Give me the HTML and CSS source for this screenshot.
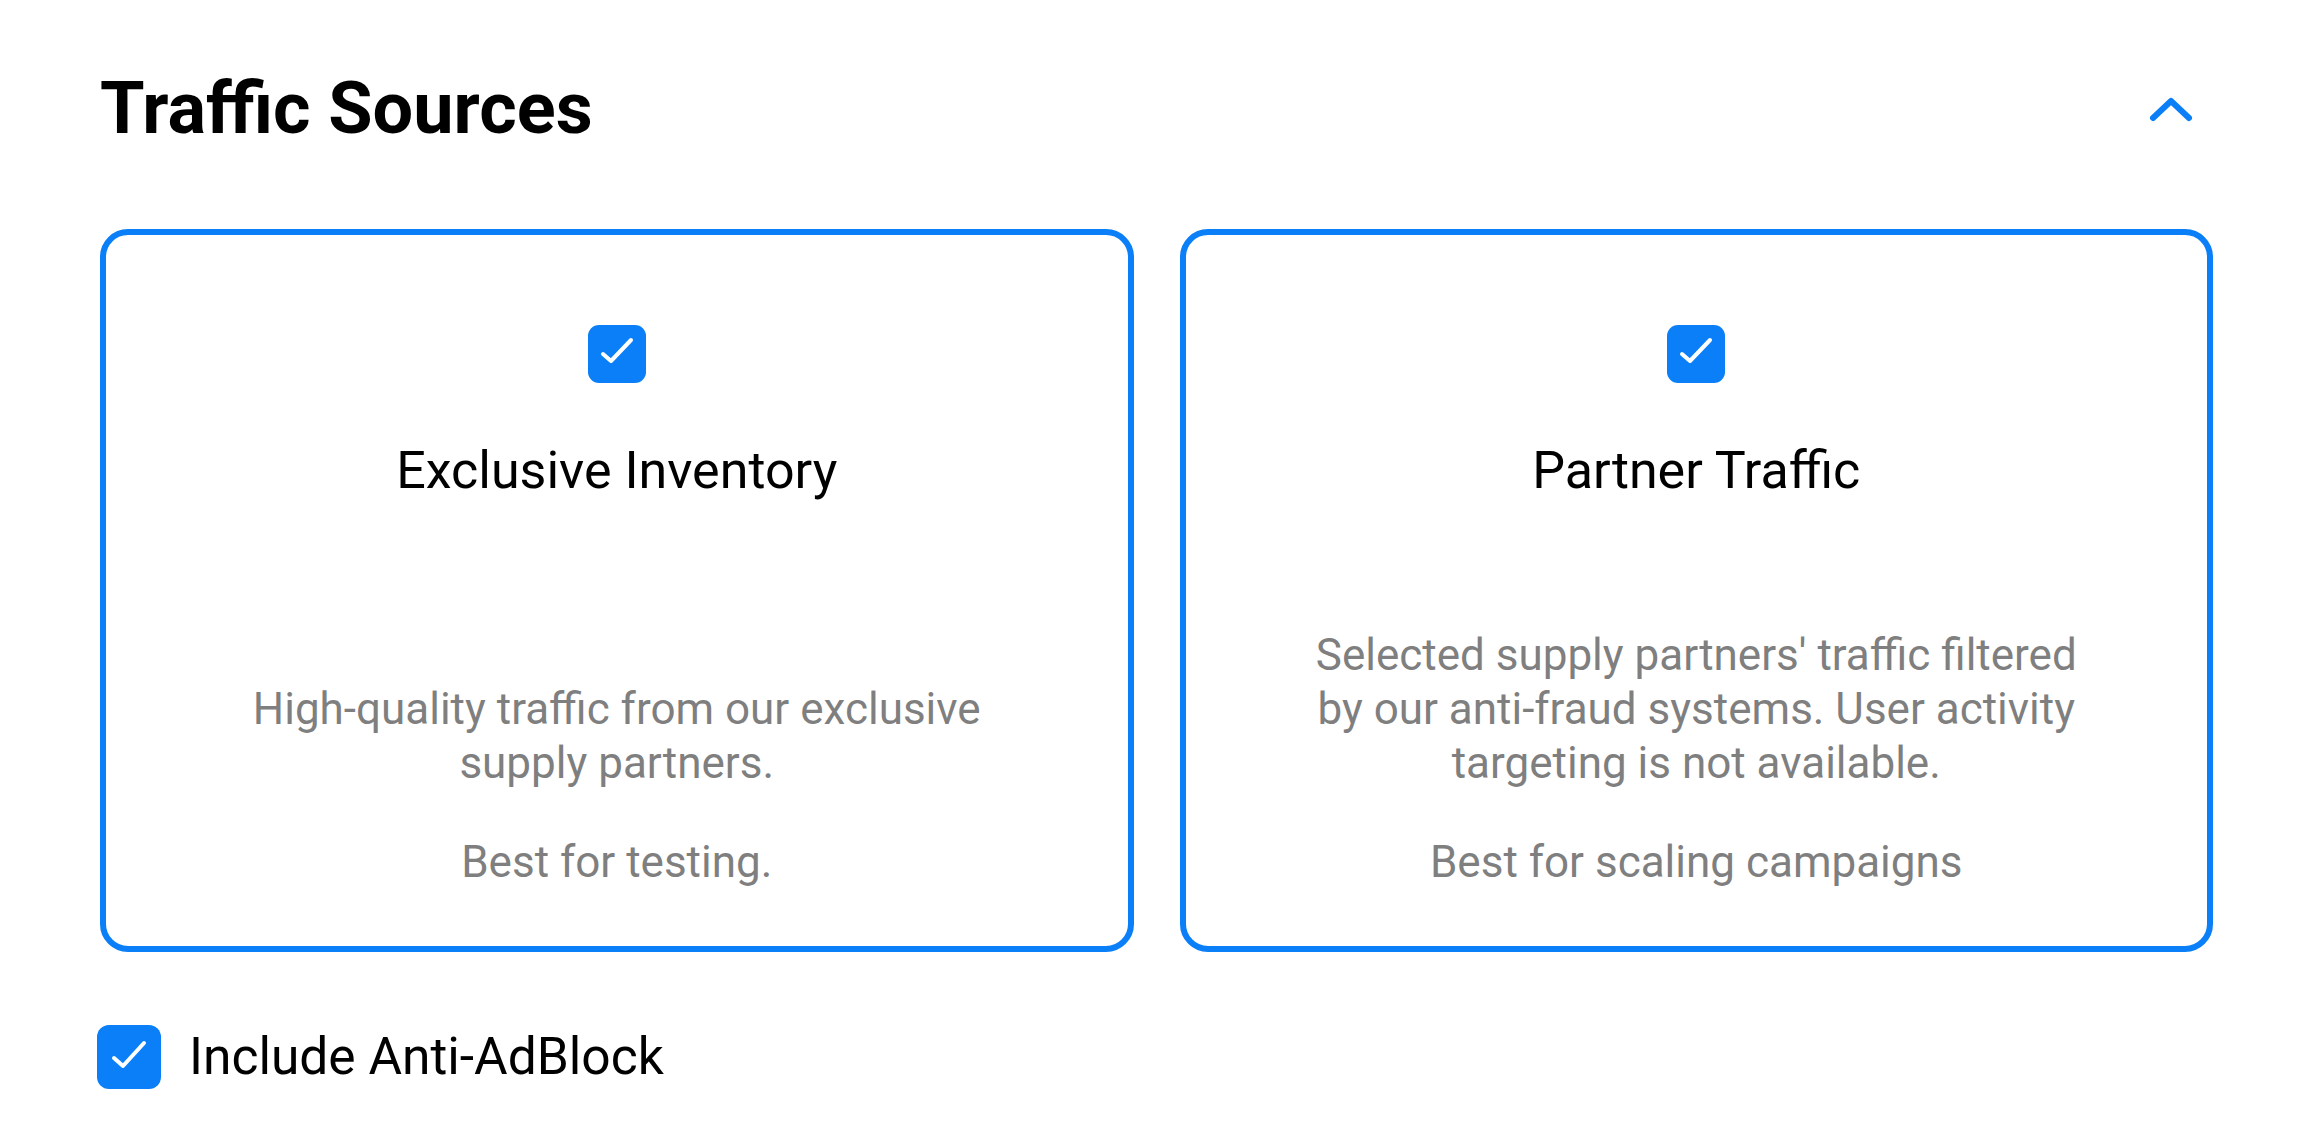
FILE: index.html
```html
<!DOCTYPE html>
<html>
<head>
<meta charset="utf-8">
<link rel="stylesheet" href="styles.css">
</head>
<body>
<section class="section">
  <header class="header">
    <h1 class="title">Traffic Sources</h1>
    <button class="collapse" aria-label="Collapse">
      <svg width="44" height="26" viewBox="0 0 44 26"><path d="M4 22 L22 5 L40 22" fill="none" stroke="#0a7ff7" stroke-width="6" stroke-linecap="round" stroke-linejoin="round"/></svg>
    </button>
  </header>
  <div class="cards">
    <div class="card">
      <span class="check">
        <svg width="58" height="58" viewBox="0 0 58 58"><path d="M15 29 L23 36 L43 15" fill="none" stroke="#fff" stroke-width="4" stroke-linecap="round" stroke-linejoin="round"/></svg>
      </span>
      <div class="card-title">Exclusive Inventory</div>
      <div class="desc">
        <p>High-quality traffic from our exclusive<br>supply partners.</p>
        <p>Best for testing.</p>
      </div>
    </div>
    <div class="card">
      <span class="check">
        <svg width="58" height="58" viewBox="0 0 58 58"><path d="M15 29 L23 36 L43 15" fill="none" stroke="#fff" stroke-width="4" stroke-linecap="round" stroke-linejoin="round"/></svg>
      </span>
      <div class="card-title">Partner Traffic</div>
      <div class="desc">
        <p>Selected supply partners' traffic filtered<br>by our anti-fraud systems. User activity<br>targeting is not available.</p>
        <p>Best for scaling campaigns</p>
      </div>
    </div>
  </div>
  <label class="option">
    <span class="check check-lg">
      <svg width="64" height="64" viewBox="0 0 64 64"><path d="M17 33 L26 41 L47 18" fill="none" stroke="#fff" stroke-width="4" stroke-linecap="round" stroke-linejoin="round"/></svg>
    </span>
    <span class="option-label">Include Anti-AdBlock</span>
  </label>
</section>
</body>
</html>
```

FILE: styles.css
```css
* { box-sizing: border-box; }
html, body { margin: 0; padding: 0; background: #fff; }
body { font-family: Roboto, "Noto Sans", sans-serif; color: #000; }

.section {
  padding: 69px 91px 0 100px;
}

.header {
  display: flex;
  justify-content: space-between;
  align-items: center;
  height: 80px;
}

.title {
  margin: 0;
  font-size: 72px;
  font-weight: 700;
  line-height: 80px;
}

.collapse {
  border: 0;
  background: none;
  padding: 0;
  margin-right: 20px;
  display: flex;
}

.cards {
  display: grid;
  grid-template-columns: 1fr 1fr;
  gap: 46px;
  margin-top: 80px;
}

.card {
  height: 723px;
  border: 6px solid #0a7ff7;
  border-radius: 28px;
  display: flex;
  flex-direction: column;
  align-items: center;
  padding: 90px 30px 57px;
  text-align: center;
}

.check {
  width: 58px;
  height: 58px;
  border-radius: 11px;
  background: #0a7ff7;
  display: flex;
  flex: none;
}

.check-lg {
  width: 64px;
  height: 64px;
  border-radius: 12px;
}

.card-title {
  margin-top: 58px;
  font-size: 52px;
  line-height: 60px;
}

.desc {
  margin-top: auto;
  font-size: 44px;
  line-height: 54px;
  color: #7f7f7f;
}

.desc p { margin: 0; }
.desc p + p { margin-top: 45px; }

.option {
  display: flex;
  align-items: center;
  gap: 28px;
  margin-top: 73px;
  margin-left: -3px;
}

.option-label {
  font-size: 51.5px;
  line-height: 64px;
}
```
